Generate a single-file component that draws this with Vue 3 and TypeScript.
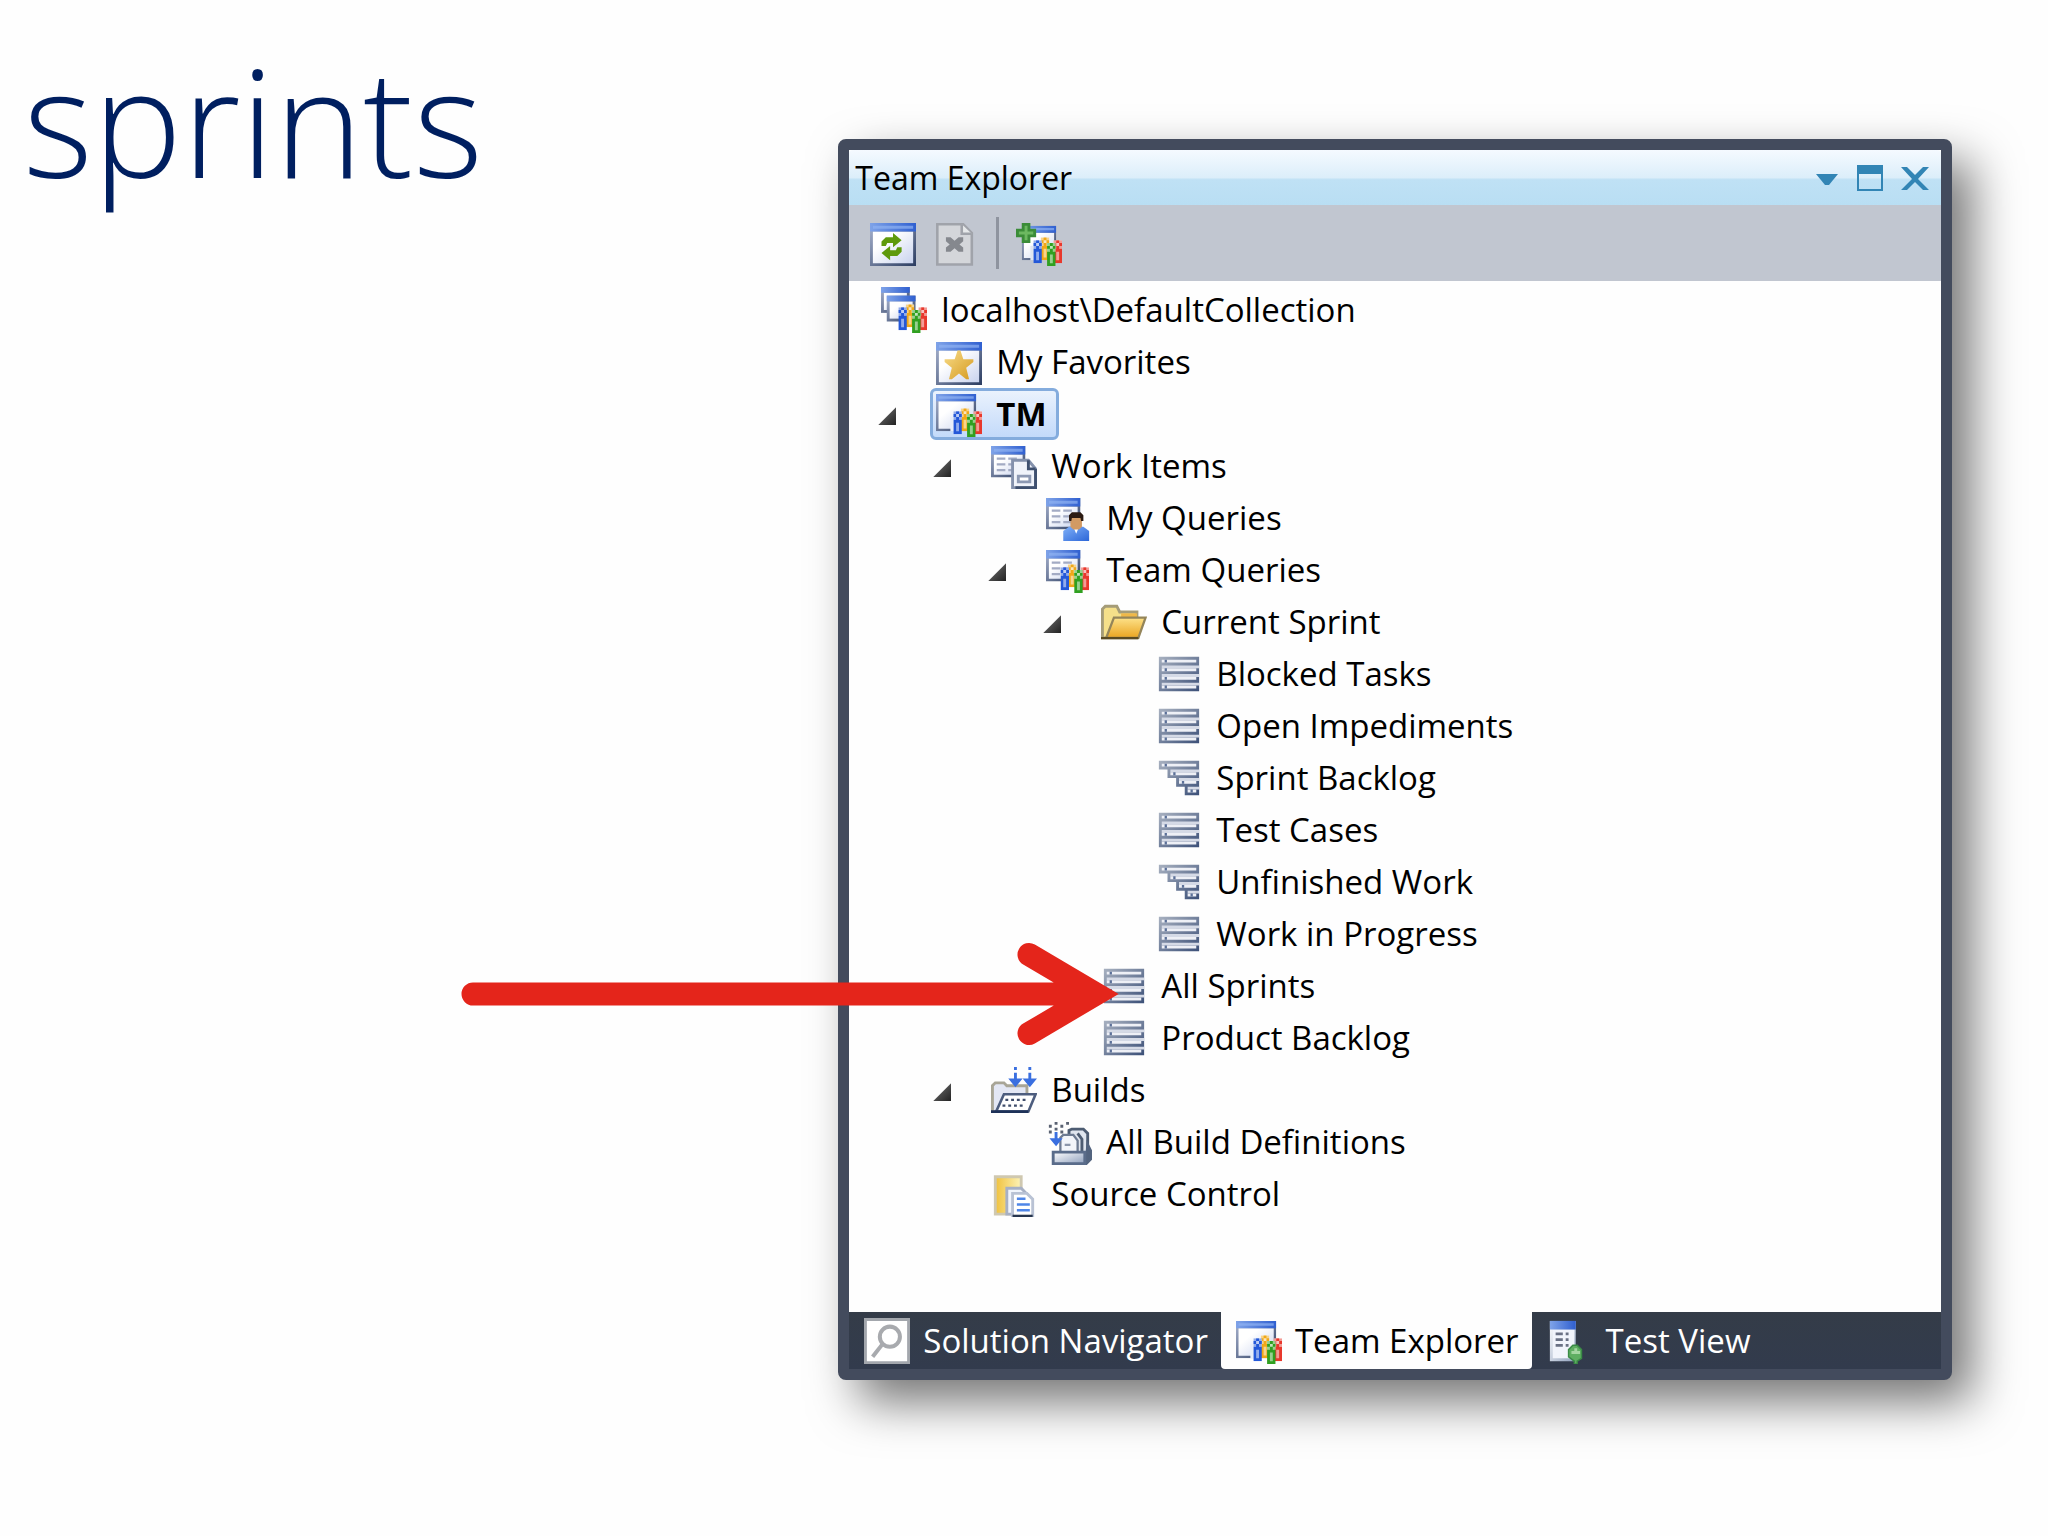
<script setup lang="ts">
import { computed, ref } from 'vue'

interface TreeNode {
  id: string
  label: string
  icon: string
  depth: number
  parent?: string
  expandable?: boolean
}

interface DockTab {
  id: string
  label: string
  icon: string
}

const nodes: TreeNode[] = [
  { id: 'root', label: 'localhost\\DefaultCollection', icon: 'collection', depth: 0 },
  { id: 'fav', label: 'My Favorites', icon: 'favorites', depth: 1 },
  { id: 'tm', label: 'TM', icon: 'project', depth: 1, expandable: true },
  { id: 'work', label: 'Work Items', icon: 'workitems', depth: 2, parent: 'tm', expandable: true },
  { id: 'mine', label: 'My Queries', icon: 'myqueries', depth: 3, parent: 'work' },
  { id: 'team', label: 'Team Queries', icon: 'teamqueries', depth: 3, parent: 'work', expandable: true },
  { id: 'sprint', label: 'Current Sprint', icon: 'folder', depth: 4, parent: 'team', expandable: true },
  { id: 'blocked', label: 'Blocked Tasks', icon: 'list', depth: 5, parent: 'sprint' },
  { id: 'open', label: 'Open Impediments', icon: 'list', depth: 5, parent: 'sprint' },
  { id: 'sbacklog', label: 'Sprint Backlog', icon: 'hierarchy', depth: 5, parent: 'sprint' },
  { id: 'tests', label: 'Test Cases', icon: 'list', depth: 5, parent: 'sprint' },
  { id: 'unfinished', label: 'Unfinished Work', icon: 'hierarchy', depth: 5, parent: 'sprint' },
  { id: 'wip', label: 'Work in Progress', icon: 'list', depth: 5, parent: 'sprint' },
  { id: 'all', label: 'All Sprints', icon: 'list', depth: 4, parent: 'team' },
  { id: 'pbacklog', label: 'Product Backlog', icon: 'list', depth: 4, parent: 'team' },
  { id: 'builds', label: 'Builds', icon: 'builds', depth: 2, parent: 'tm', expandable: true },
  { id: 'builddefs', label: 'All Build Definitions', icon: 'builddefs', depth: 3, parent: 'builds' },
  { id: 'source', label: 'Source Control', icon: 'source', depth: 2, parent: 'tm' },
]

const tabs: DockTab[] = [
  { id: 'nav', label: 'Solution Navigator', icon: 'search' },
  { id: 'explorer', label: 'Team Explorer', icon: 'project' },
  { id: 'test', label: 'Test View', icon: 'testview' },
]

const pointedAt = 'all'
const selected = ref('tm')
const activeTab = ref('explorer')
const collapsed = ref<string[]>([])

function isVisible(node: TreeNode): boolean {
  let parent = node.parent
  while (parent) {
    if (collapsed.value.includes(parent)) return false
    parent = nodes.find((n) => n.id === parent)?.parent
  }
  return true
}

const visibleNodes = computed(() => nodes.filter(isVisible))

function toggle(id: string): void {
  collapsed.value = collapsed.value.includes(id)
    ? collapsed.value.filter((c) => c !== id)
    : [...collapsed.value, id]
}
</script>

<template>
  <main class="slide">
    <svg class="sprite" aria-hidden="true">
      <defs>
        <linearGradient id="g-title" x1="0" x2="1" y1="0" y2="0">
          <stop offset="0" stop-color="#7fa3e8" />
          <stop offset="1" stop-color="#2f5fd0" />
        </linearGradient>
        <linearGradient id="g-body" x1="0" x2="1" y1="0" y2="1">
          <stop offset="0.3" stop-color="#ffffff" />
          <stop offset="1" stop-color="#c9d3ee" />
        </linearGradient>
        <linearGradient id="g-frame" x1="0" x2="1" y1="0" y2="1">
          <stop offset="0" stop-color="#a9b4cf" />
          <stop offset="1" stop-color="#2b3c60" />
        </linearGradient>
        <linearGradient id="g-bar" x1="0" x2="1" y1="0" y2="1">
          <stop offset="0" stop-color="#a8b1c0" />
          <stop offset="1" stop-color="#3c5078" />
        </linearGradient>
        <linearGradient id="g-gold" x1="0" x2="0" y1="0" y2="1">
          <stop offset="0" stop-color="#fde28a" />
          <stop offset="1" stop-color="#eaa420" />
        </linearGradient>
        <linearGradient id="g-goldside" x1="0" x2="1" y1="0" y2="0">
          <stop offset="0" stop-color="#f0c13c" />
          <stop offset="1" stop-color="#fdf3b8" />
        </linearGradient>
        <linearGradient id="g-star" x1="0" x2="1" y1="0" y2="1">
          <stop offset="0" stop-color="#f8dc88" />
          <stop offset="1" stop-color="#d59a20" />
        </linearGradient>
        <linearGradient id="g-shirt" x1="0" x2="1" y1="0" y2="1">
          <stop offset="0" stop-color="#7fb0f8" />
          <stop offset="1" stop-color="#2c66d8" />
        </linearGradient>
        <linearGradient id="g-steel" x1="0" x2="1" y1="0" y2="1">
          <stop offset="0" stop-color="#ffffff" />
          <stop offset="1" stop-color="#8fa0bd" />
        </linearGradient>
      </defs>

      <symbol id="person" viewBox="0 0 3 8">
        <path d="M0 0h3v3H0z" fill="#fff" />
        <path d="M0 0h3v3H0z" fill="currentColor" opacity=".5" />
        <path d="M1 0h1v1h1v1H2v1h1v5H0V3h1V2H0V1h1z" fill="currentColor" />
        <path d="M1 1h1v1H1z" fill="#fff" opacity=".7" />
        <path d="M1 4h1v3H1z" fill="#fff" opacity=".5" />
      </symbol>

      <symbol id="crew" viewBox="0 0 10 10">
        <use href="#person" x="2.6" y="0" width="3" height="8" color="#f0a818" />
        <use href="#person" x="7" y="1" width="3" height="8" color="#e8382c" />
        <use href="#person" x="0" y="1" width="3" height="8" color="#2458d8" />
        <use href="#person" x="4.8" y="2" width="3" height="8" color="#30a020" />
      </symbol>

      <symbol id="window" viewBox="0 0 16 15" preserveAspectRatio="none">
        <path d="M0 0h16v15H0z" fill="url(#g-frame)" />
        <path d="M1 3h14v11H1z" fill="url(#g-body)" />
        <path d="M0 0h16v3H0z" fill="url(#g-title)" />
        <path d="M1 1h14v1H1z" fill="#8fb2f2" opacity=".7" />
      </symbol>

      <symbol id="listwindow" viewBox="0 0 12 11">
        <path d="M0 0h12v11H0z" fill="url(#g-frame)" />
        <path d="M1 3h10v7H1z" fill="url(#g-body)" />
        <path d="M0 0h12v3H0z" fill="url(#g-title)" />
        <path d="M1 1h10v1H1z" fill="#8fb2f2" opacity=".7" />
        <path d="M2 4h3v.8H2zM6 4h3v.8H6zM2 6h3v.8H2zM6 6h3v.8H6zM2 8h3v.8H2zM6 8h3v.8H6z" fill="#a3abc4" />
      </symbol>

      <symbol id="i-collection" viewBox="0 0 16 16">
        <path d="M0 0h10v9H0z" fill="url(#g-frame)" />
        <path d="M1 2h8v6H1z" fill="url(#g-body)" />
        <path d="M0 0h10v2H0z" fill="url(#g-title)" />
        <path d="M2 3h10v9H2z" fill="url(#g-frame)" />
        <path d="M3 5h8v6H3z" fill="url(#g-body)" />
        <path d="M2 3h10v2H2z" fill="url(#g-title)" />
        <use href="#crew" x="6" y="6" width="10" height="10" />
      </symbol>

      <symbol id="i-favorites" viewBox="0 0 16 16">
        <use href="#window" x="0" y="1" width="16" height="15" />
        <path d="M7.500 4h1L9.500 7H13v1l-2.500 2 1 4h-1L8 12l-2.500 2h-1l1-4L3 8V7h3.500z" fill="url(#g-star)" />
      </symbol>

      <symbol id="i-project" viewBox="0 0 16 16">
        <use href="#window" x="0" y="1" width="14" height="13" />
        <path d="M5 9h9v5H5z" fill="#e9effa" />
        <use href="#crew" x="6" y="6" width="10" height="10" />
      </symbol>

      <symbol id="i-workitems" viewBox="0 0 16 16">
        <use href="#listwindow" x="0" y="1" width="12" height="11" />
        <path d="M7.500 6H13l2.500 3v6.500h-8z" fill="#f0f3fa" stroke="#8491ac" />
        <path d="M13 6v3h2.500M15.500 9v6.500h-7" fill="none" stroke="#3f506f" />
        <path d="M9.500 11.500h4v2h-4z" fill="#fff" stroke="#8d99b3" />
      </symbol>

      <symbol id="i-myqueries" viewBox="0 0 16 16">
        <use href="#listwindow" x="0" y="1" width="12" height="11" />
        <path d="M6 16v-3.500L8 11h5l2 1.500V16z" fill="url(#g-shirt)" />
        <path d="M9.500 11h2l-1 2.500z" fill="#fff" />
        <path d="M8.500 7h4v4l-1 1h-2l-1-1z" fill="#d29a63" />
        <path d="M8 9V7l1-1h3l1 1v2h-.8L12 8H9l-.2 1z" fill="#2b1a12" />
      </symbol>

      <symbol id="i-teamqueries" viewBox="0 0 16 16">
        <use href="#listwindow" x="0" y="1" width="12" height="11" />
        <use href="#crew" x="5" y="6" width="10" height="10" />
      </symbol>

      <symbol id="i-folder" viewBox="0 0 16 16">
        <path d="M.5 13.500V3.500l1-1h4l1 2h6v9z" fill="#f5e08a" stroke="#a59c78" />
        <path d="M7 5h5.500v2H7z" fill="#f0b848" />
        <path d="M4.500 6.500h11l-2.500 7H1.800z" fill="url(#g-gold)" stroke="#94855a" stroke-width=".8" />
        <path d="M0 13.200h13v.8H0z" fill="#5a4a22" />
      </symbol>

      <symbol id="i-list" viewBox="0 0 16 16">
        <path d="M1 2h14v12H1z" fill="url(#g-bar)" />
        <path d="M2 3h12v1H2zM2 6h12v1H2zM2 9h12v1H2zM2 12h12v1H2z" fill="#eef0f6" />
        <path d="M2 5h13v1H2zM2 8h13v1H2zM2 11h13v1H2z" fill="#d5dae6" />
        <path d="M3 3h.8v1H3zM3 6h.8v1H3zM3 9h.8v1H3zM3 12h.8v1H3z" fill="#5b7098" />
      </symbol>

      <symbol id="i-hierarchy" viewBox="0 0 16 16">
        <path d="M1 2h14v12h-5v-3H7V8H4V5H1z" fill="url(#g-bar)" />
        <path d="M2 3h12v1H2zM5 6h9v1H5zM8 9h6v1H8zM11 12h3v1h-3z" fill="#eef0f6" />
        <path d="M5 5h10v1H5zM8 8h7v1H8zM11 11h4v1h-4z" fill="#d5dae6" />
        <path d="M3 3h.8v1H3zM6 6h.8v1H6zM9 9h.8v1H9zM12 12h.8v1H12z" fill="#5b7098" />
      </symbol>

      <symbol id="i-builds" viewBox="0 0 16 16">
        <path d="M.5 15.500V6.500l1-1h3l1 1h7v9z" fill="#e3e7f4" stroke="#a8a596" />
        <path d="M4.500 9.500h11l-2.500 6H1.800z" fill="#fff" stroke="#4d5d7e" stroke-width=".9" />
        <path d="M0 15h13v1H0z" fill="#1d3158" />
        <path d="M5 11h1v.8H5zM7 11h1v.8H7zM9 11h1v.8H9zM11 11h1v.8h-1zM4 13h1v.8H4zM6 13h1v.8H6zM8 13h1v.8H8zM10 13h1v.8h-1z" fill="#3f4d6b" />
        <path d="M8 0h1v1H8zM13 0h1v1h-1zM8 2h1v2h2l-2.500 3L6 4h2zM13 2h1v2h2l-2.500 3L11 4h2z" fill="#3a6fe0" />
      </symbol>

      <symbol id="i-builddefs" viewBox="0 0 16 16">
        <path d="M0 2h1v1H0zM2 1h1v1H2zM4 2h1v1H4zM6 1h1v1H6zM0 4h1v1H0zM2 3h1v1H2zM4 4h1v1H4z" fill="#5a6272" transform="translate(1 0)" />
        <path d="M8 12V4l1-.5h4L14.500 5v7z" fill="#dfe5ee" stroke="#4d5c72" />
        <path d="M11 5l1.500 2v5" fill="none" stroke="#4d5c72" />
        <path d="M5 12V6.500l1-1h3.500L11 7.500V12z" fill="#f2f5fa" stroke="#6d7b92" stroke-width=".8" />
        <path d="M6.500 8.600h2v.8h-2z" fill="#8b96aa" />
        <path d="M14.500 9l1 2v3l-1.500 1.500z" fill="#53647f" stroke="#53647f" />
        <path d="M2.500 11.500h11v4h-11z" fill="url(#g-steel)" stroke="#5a6c8a" />
        <path d="M3 4.500h1v2.200h1.800L3.500 9.500 1.200 6.700H3z" fill="#3a6fe0" />
      </symbol>

      <symbol id="i-source" viewBox="0 0 16 16">
        <path d="M1.500 2h9v13h-9z" fill="url(#g-goldside)" stroke="#cfc8b0" />
        <path d="M5.500 6h5l2 2v7h-7z" fill="#f1f5fc" stroke="#a7b0c4" />
        <path d="M7.500 7.800h5l2 2v6h-7z" fill="#fff" stroke="#b9c2d4" />
        <path d="M9 9.200h3v.9H9zM9 11.200h4.500v.9H9zM9 13.200h4.500v.9H9z" fill="#4f86e8" />
        <path d="M7.500 15.200h7v.8h-7z" fill="#27364f" />
      </symbol>

      <symbol id="i-refresh" viewBox="0 0 16 16">
        <use href="#window" x="0" y="1" width="16" height="15" />
        <path d="M4 9V7.500L5.500 6H8V4.500l3 2.500-3 2.500V8H6L5.500 9zM11 9.500V11l-1.500 1.500H7V14l-3-2.500L7 9v1.500h2l.5-1z" fill="#5f9a0c" />
      </symbol>

      <symbol id="i-stop" viewBox="0 0 16 16">
        <path d="M1.500 1.500h9l3 3v11h-12z" fill="#d4d6da" stroke="#a0a3aa" stroke-width=".9" />
        <path d="M10 1.500v3.300h3.500" fill="#e6e8ea" stroke="#a0a3aa" stroke-width=".9" />
        <path d="M4.500 6h1.600l1.400 1.200L8.900 6h1.600v1.400L9.200 8.500l1.300 1.100V11H8.900L7.500 9.800 6.100 11H4.500V9.600l1.300-1.100-1.300-1.100z" fill="#85888e" />
      </symbol>

      <symbol id="i-addproject" viewBox="0 0 16 16">
        <use href="#window" x="2" y="2" width="12" height="12" />
        <path d="M5 9h9v5H5z" fill="#e1e6f0" />
        <path d="M2.500 1.500h2v2h2v2h-2v2h-2v-2h-2v-2h2z" fill="#6cb860" stroke="#3b8c38" />
        <use href="#crew" x="6" y="6" width="10" height="10" />
      </symbol>

      <symbol id="i-search" viewBox="0 0 16 16">
        <path d="M.5 .5h15v15H.5z" fill="#fff" stroke="#a3a7ad" />
        <circle cx="9" cy="6.500" r="3.500" fill="#fff" stroke="#a8aaae" stroke-width="1.400" />
        <path d="M6.500 9L3 13.500" fill="none" stroke="#a8aaae" stroke-width="1.400" />
      </symbol>

      <symbol id="i-testview" viewBox="0 0 16 16">
        <path d="M1 1h9v14H1z" fill="url(#g-steel)" />
        <path d="M2 4h7.500v10H2z" fill="#f1f4fb" />
        <path d="M1 1h9v3H1z" fill="url(#g-title)" />
        <path d="M3 5h2.500v1H3zM6.500 5h1v1h-1zM3 7h2.500v1H3zM6.500 7h1v1h-1zM3 9h2.500v1H3zM6.500 9h1v1h-1z" fill="#6a7184" />
        <path d="M9 9.500h1.500l1.500 1.500v3l-1.500 1v1H9.500v-1L7.500 13.500V11z" fill="#5fae62" stroke="#3a8a46" stroke-width=".5" />
        <path d="M9.500 10.500h1v1h1v1h-3v-1h1z" fill="#a5d6a2" />
      </symbol>
    </svg>

    <h1 class="heading">sprints</h1>

    <section class="panel" aria-label="Team Explorer">
      <header class="titlebar">
        <h2 class="title">Team Explorer</h2>
        <button class="chrome" type="button" aria-label="Window position">
          <svg viewBox="0 0 28 28"><path d="M5 10h22L18 21h-4z" /></svg>
        </button>
        <button class="chrome" type="button" aria-label="Maximize">
          <svg viewBox="0 0 28 28"><path d="M1 1h26v26H1zM3 10v15h22V10z" fill-rule="evenodd" /></svg>
        </button>
        <button class="chrome" type="button" aria-label="Close">
          <svg viewBox="0 0 28 28"><path d="M0 3h6l8 8 8-8h6L17 15l11 11h-6l-8-8-8 8H0l11-11z" /></svg>
        </button>
      </header>

      <div class="toolbar">
        <button class="tool" type="button" aria-label="Refresh">
          <svg class="icon"><use href="#i-refresh" /></svg>
        </button>
        <button class="tool" type="button" aria-label="Stop refresh" disabled>
          <svg class="icon"><use href="#i-stop" /></svg>
        </button>
        <span class="divider"></span>
        <button class="tool" type="button" aria-label="Connect to team project">
          <svg class="icon"><use href="#i-addproject" /></svg>
        </button>
      </div>

      <ul class="tree">
        <li v-for="node in visibleNodes" :key="node.id" class="row" :style="{ '--depth': node.depth }">
          <button
            v-if="node.expandable"
            class="toggle"
            type="button"
            :class="{ closed: collapsed.includes(node.id) }"
            :aria-label="`Toggle ${node.label}`"
            :aria-expanded="!collapsed.includes(node.id)"
            @click="toggle(node.id)"
          ></button>
          <button class="node" type="button" :class="{ selected: selected === node.id }" @click="selected = node.id">
            <svg class="icon"><use :href="`#i-${node.icon}`" /></svg>
            <span>{{ node.label }}</span>
          </button>
          <svg v-if="node.id === pointedAt" class="pointer" viewBox="0 0 658 104" aria-hidden="true">
            <path d="M12 52H632M568 12.500L635 52 568 91.500" />
          </svg>
        </li>
      </ul>

      <nav class="tabs" aria-label="Docked windows">
        <button
          v-for="tab in tabs"
          :key="tab.id"
          class="tab"
          type="button"
          :class="{ active: activeTab === tab.id }"
          @click="activeTab = tab.id"
        >
          <svg class="icon"><use :href="`#i-${tab.icon}`" /></svg>
          <span>{{ tab.label }}</span>
        </button>
      </nav>
    </section>
  </main>
</template>

<style>
body {
  background: #fefefe;
}
</style>

<style scoped>
.slide {
  display: grid;
  grid-template-columns: 41fr 59fr;
  align-items: start;
  min-height: 100vh;
  box-sizing: border-box;
  padding-right: 96px;
  font-family: 'Open Sans', 'Noto Sans', sans-serif;
  font-size: 33px;
  color: #000;
}

.sprite {
  position: absolute;
  width: 0;
  height: 0;
}

.heading {
  margin: 16px 0 0 23px;
  font-size: 150px;
  line-height: 208px;
  font-weight: 300;
  color: #001f60;
}

.panel {
  margin: 139px 0 0 38px;
  border: 11px solid #434b5d;
  border-radius: 8px;
  background: #fefefe;
  box-shadow: 20px 22px 48px rgba(0, 0, 0, 0.54);
}

button {
  margin: 0;
  padding: 0;
  border: 0;
  background: none;
  font: inherit;
  color: inherit;
}

.icon {
  display: block;
  flex: none;
  width: 46px;
  height: 46px;
}

.titlebar {
  display: flex;
  align-items: center;
  gap: 17px;
  height: 55px;
  padding: 0 12px 0 6px;
  border-radius: 4px 4px 0 0;
  background: linear-gradient(#f5faff, #dceefa 50%, #bfe1f5 54%, #b9def3);
}

.title {
  flex: 1;
  margin: 0;
  font-size: 32px;
  font-weight: 400;
}

.chrome {
  width: 28px;
  height: 28px;
}

.chrome svg {
  display: block;
  fill: #3285b5;
}

.toolbar {
  display: flex;
  align-items: center;
  gap: 17px;
  height: 76px;
  padding: 0 21px;
  background: #c1c6d0;
}

.divider {
  width: 3px;
  height: 52px;
  background: #8f949f;
}

.tree {
  margin: 0;
  padding: 3px 0 92px;
  list-style: none;
}

.row {
  position: relative;
  display: flex;
  align-items: center;
  height: 52px;
  padding-left: calc(26px + 55px * var(--depth));
}

.toggle {
  width: 18px;
  height: 18px;
  margin: 4px 34px 0 -52px;
  background: linear-gradient(135deg, #777, #222);
  clip-path: polygon(100% 0, 100% 100%, 0 100%);
}

.toggle.closed {
  clip-path: polygon(20% 0, 80% 50%, 20% 100%);
}

.node {
  display: flex;
  align-items: center;
  gap: 14px;
  height: 52px;
  padding: 0 9px 0 3px;
  border: 3px solid transparent;
  border-radius: 6px;
  line-height: 44px;
  white-space: nowrap;
}

.node.selected {
  border-color: #84acdd;
  background: linear-gradient(#eaf2fd, #c3dafa);
  font-weight: 700;
}

.pointer {
  position: absolute;
  top: -18px;
  left: -388px;
  width: 658px;
  height: 104px;
  fill: none;
  stroke: #e4251b;
  stroke-width: 23px;
  stroke-linecap: round;
  pointer-events: none;
}

.tabs {
  display: flex;
  height: 57px;
  background: linear-gradient(#343c48, #323b4d);
  color: #fff;
}

.tab {
  display: flex;
  align-items: center;
  gap: 13px;
  padding: 0 13px 0 15px;
  white-space: nowrap;
}

.tab.active {
  background: #fefefe;
  color: #000;
  border-radius: 0 0 4px 4px;
}
</style>
